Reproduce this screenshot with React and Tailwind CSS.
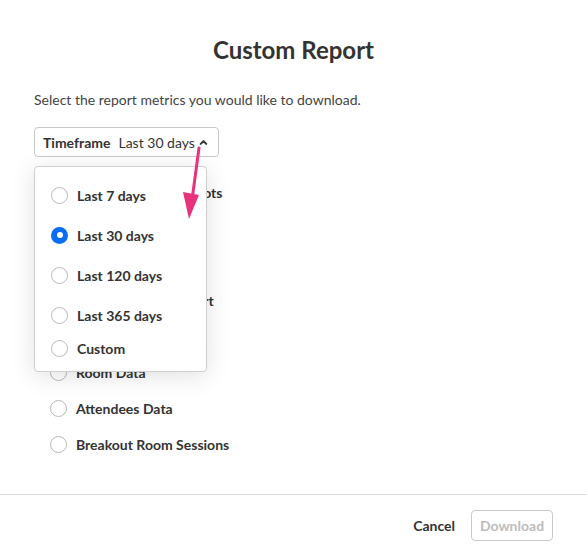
import { FiChevronUp } from 'react-icons/fi';

const metrics = [
	'Photo Booth Snapshots',
	'Polls Data',
	'Q&A Data',
	'Meeting Room Report',
	'Chat Data',
	'Room Data',
	'Attendees Data',
	'Breakout Room Sessions',
];

const timeframes = [
	{ label: 'Last 7 days', h: 'h-10' },
	{ label: 'Last 30 days', h: 'h-10', checked: true },
	{ label: 'Last 120 days', h: 'h-10' },
	{ label: 'Last 365 days', h: 'h-10' },
	{ label: 'Custom', h: 'h-[26px]' },
];

const Radio = ({ checked }) => (
	checked ? (
		<span className="w-[17px] h-[17px] rounded-full bg-[#0a6cf5] flex items-center justify-center shrink-0">
			<span className="w-[6px] h-[6px] rounded-full bg-white" />
		</span>
	) : (
		<span className="w-[17px] h-[17px] rounded-full border border-[#b8b8b8] bg-white shrink-0" />
	)
);

const App = () => {
	return (
		<div className="relative w-[587px] h-[556px] bg-white flex flex-col text-[#333] overflow-hidden" style={{ fontFamily: 'Lato, "Open Sans", sans-serif' }}>
			<div className="flex-1 px-[34px]">
				{/* Title */}
				<h1 className="text-[24px] font-bold text-center pt-[34px] leading-8 text-[#333]">Custom Report</h1>
				<p className="text-[14px] mt-[24px] leading-5 text-[#444]">Select the report metrics you would like to download.</p>

				{/* Timeframe select */}
				<div className="relative mt-[17px]">
					<button className="h-[30px] w-[185px] border border-[#c8c8c8] rounded-[4px] flex items-center pl-[8px] pr-[9px] text-[14px] bg-white">
						<span className="font-bold text-[#333]">Timeframe</span>
						<span className="ml-[8px] text-[#333]">Last 30 days</span>
						<FiChevronUp className="ml-auto w-[11px] h-[11px] text-[#333]" strokeWidth={4.5} />
					</button>

					{/* Metrics list */}
					<div className="pl-4 pt-[17px] flex flex-col">
						{metrics.map((m) => (
							<div key={m} className="h-9 flex items-center gap-[9px]">
								<Radio />
								<span className="text-[14px] font-bold text-[#333]">{m}</span>
							</div>
						))}
					</div>

					{/* Dropdown */}
					<div className="absolute left-0 top-[39px] w-[173px] bg-white border border-[#cfcfcf] rounded-[4px] shadow-[0_4px_24px_rgba(0,0,0,0.12)] pt-[8px] pb-[10px] pl-[16px] flex flex-col">
						{timeframes.map((t) => (
							<div key={t.label} className={`${t.h} flex items-center gap-[9px]`}>
								<Radio checked={t.checked} />
								<span className="text-[14px] font-bold text-[#333]">{t.label}</span>
							</div>
						))}
					</div>
				</div>
			</div>

			{/* Footer */}
			<div className="h-[62px] border-t border-[#dcdcdc] flex items-center justify-end gap-4 pr-[34px]">
				<button className="text-[14px] font-bold text-[#333]">Cancel</button>
				<button className="h-[31px] w-[82px] border border-[#c8c8c8] rounded-[4px] text-[14px] font-bold text-[#bdbdbd]">Download</button>
			</div>

			{/* Annotation arrow */}
			<svg className="absolute left-0 top-0 pointer-events-none" width="587" height="556">
				<line x1="199" y1="148" x2="192" y2="200" stroke="#e8327c" strokeWidth="3" strokeLinecap="round" />
				<polygon points="183,192 199,195 189,219" fill="#e8327c" />
			</svg>
		</div>
	);
};

export default App;
